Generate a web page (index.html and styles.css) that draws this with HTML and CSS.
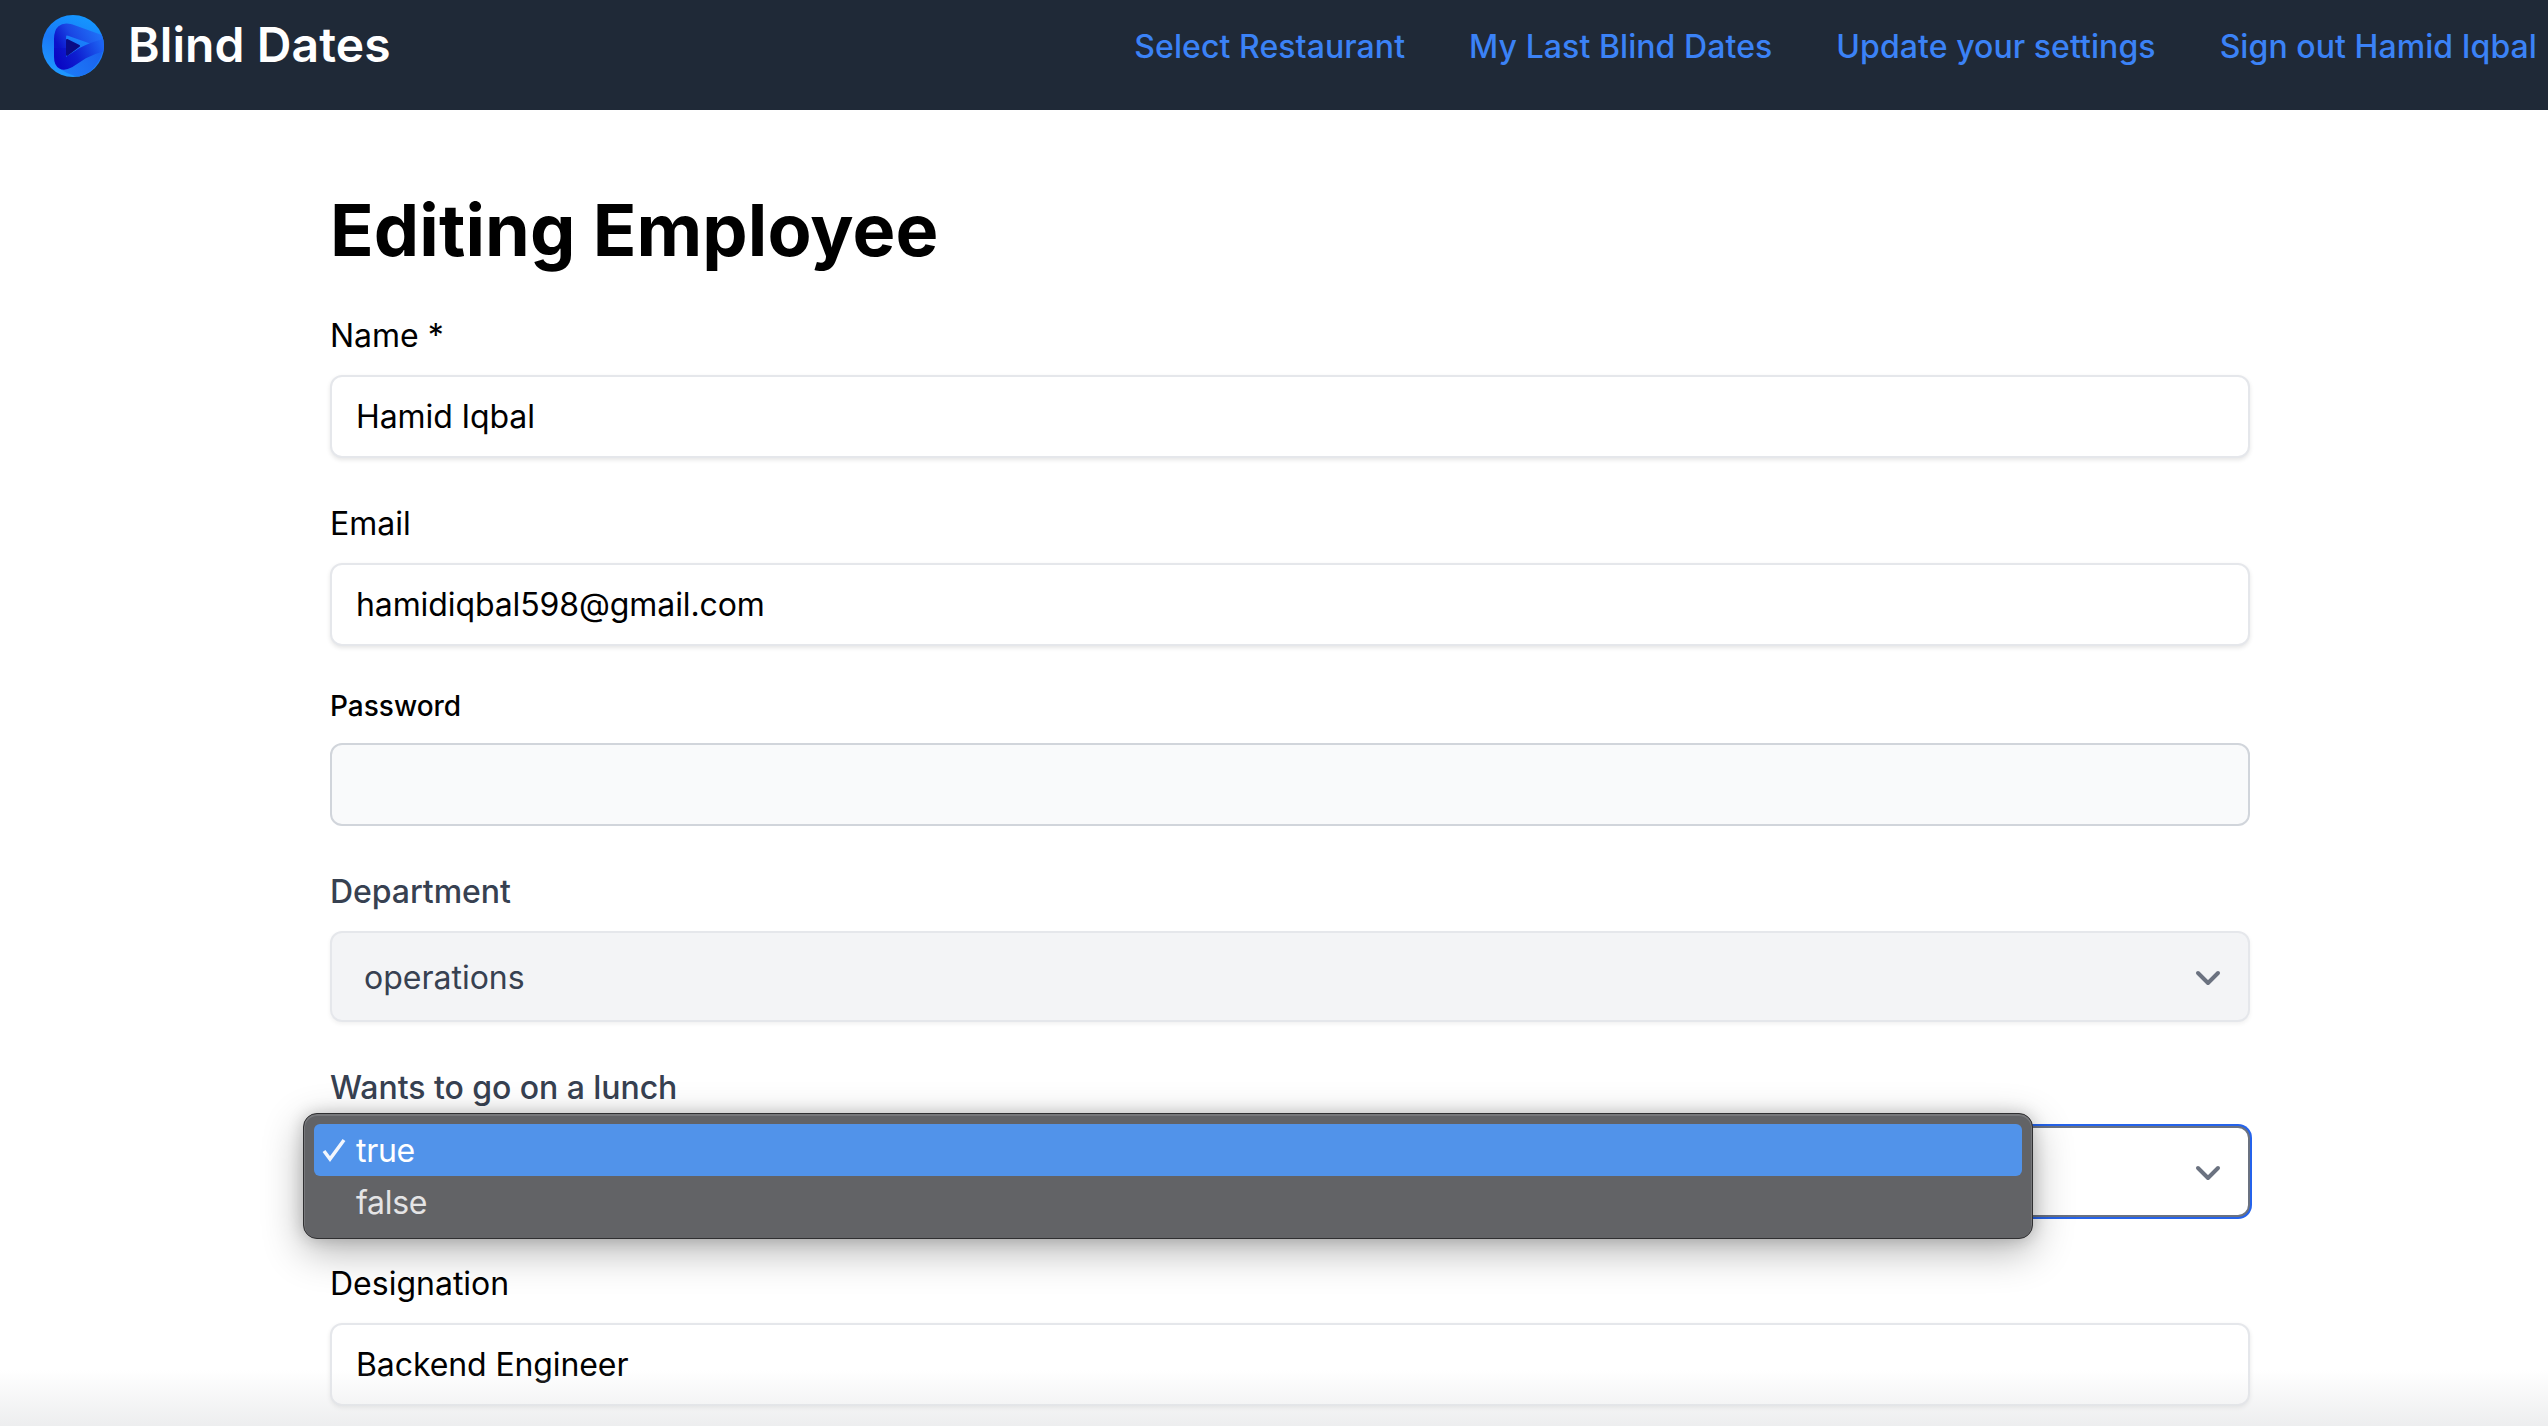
FILE: index.html
```html
<!DOCTYPE html>
<html lang="en">
<head>
<meta charset="utf-8">
<title>Editing Employee</title>
<link rel="stylesheet" href="styles.css">
</head>
<body>
<header class="topbar">
  <a class="brand" href="#">
    <svg class="brand-logo" viewBox="0 0 62 62" aria-hidden="true">
      <defs>
        <linearGradient id="disc" x1="0.7" y1="0" x2="0.3" y2="1">
          <stop offset="0" stop-color="#1498ff"/>
          <stop offset="0.5" stop-color="#1a78f8"/>
          <stop offset="1" stop-color="#1f9bff"/>
        </linearGradient>
        <linearGradient id="shell" gradientUnits="userSpaceOnUse" x1="20" y1="58" x2="60" y2="34">
          <stop offset="0" stop-color="#1c7cf8"/>
          <stop offset="1" stop-color="#1a60ee"/>
        </linearGradient>
        <linearGradient id="bandTop" gradientUnits="userSpaceOnUse" x1="18" y1="34" x2="55" y2="12">
          <stop offset="0" stop-color="#0b11ca"/>
          <stop offset="0.4" stop-color="#1a46e4"/>
          <stop offset="1" stop-color="#2072f8"/>
        </linearGradient>
        <linearGradient id="bandLow" gradientUnits="userSpaceOnUse" x1="18" y1="50" x2="60" y2="30">
          <stop offset="0" stop-color="#0a08c4"/>
          <stop offset="0.4" stop-color="#0e1ed0"/>
          <stop offset="1" stop-color="#1d62f2"/>
        </linearGradient>
        <clipPath id="discClip"><circle cx="31" cy="31" r="31"/></clipPath>
      </defs>
      <circle cx="31" cy="31" r="31" fill="url(#disc)"/>
      <g clip-path="url(#discClip)">
        <path d="M14 50Q24 60 38 62Q56 56 62 32L40 44L26 52Z" fill="url(#shell)"/>
        <path d="M18 34V24Q18 12 28 15L62 27" fill="none" stroke="url(#bandTop)" stroke-width="12"/>
        <path d="M18 33V42Q18 52 27 47L41 38Q50 33 62 30" fill="none" stroke="url(#bandLow)" stroke-width="12"/>
        <path d="M25 25L37 31L25 40Z" fill="#0a0c86" stroke="#0a0c86" stroke-width="2" stroke-linejoin="round"/>
      </g>
    </svg>
    <span class="brand-name">Blind Dates</span>
  </a>
  <nav class="nav">
    <a href="#">Select Restaurant</a>
    <a href="#">My Last Blind Dates</a>
    <a href="#">Update your settings</a>
    <a href="#">Sign out Hamid Iqbal</a>
  </nav>
</header>

<main class="page">
  <h1 class="title">Editing Employee</h1>

  <div class="group">
    <label class="label">Name *</label>
    <div class="control">Hamid Iqbal</div>
  </div>

  <div class="group">
    <label class="label">Email</label>
    <div class="control">hamidiqbal598@gmail.com</div>
  </div>

  <div class="group group-password">
    <label class="label label-small">Password</label>
    <div class="control control-muted"></div>
  </div>

  <div class="group">
    <label class="label label-grey">Department</label>
    <div class="select select-disabled">
      <span>operations</span>
      <svg class="chevron" viewBox="0 0 26 16" aria-hidden="true"><path d="M3 3l10 10L23 3"/></svg>
    </div>
  </div>

  <div class="group group-lunch">
    <label class="label label-grey">Wants to go on a lunch</label>
    <div class="select select-focus">
      <span></span>
      <svg class="chevron" viewBox="0 0 26 16" aria-hidden="true"><path d="M3 3l10 10L23 3"/></svg>
    </div>
    <div class="menu">
      <div class="option option-active">
        <svg class="check" viewBox="0 0 24 24" aria-hidden="true"><path d="M2 13l6 8L22 2"/></svg>
        <span>true</span>
      </div>
      <div class="option"><span>false</span></div>
    </div>
  </div>

  <div class="group">
    <label class="label">Designation</label>
    <div class="control">Backend Engineer</div>
  </div>
</main>

<div class="bottom-fade"></div>
</body>
</html>
```

FILE: styles.css
```css
* { box-sizing: border-box; }

html, body {
  margin: 0;
  height: 1426px;
  overflow: hidden;
  background: #fff;
}

body {
  position: relative;
  font-family: Inter, "Noto Sans", sans-serif;
  font-size: 32px;
  color: #000;
}

.topbar {
  display: flex;
  align-items: center;
  justify-content: space-between;
  height: 110px;
  padding: 0 11px 18px 42px;
  background: #1f2937;
}

.brand {
  display: flex;
  align-items: center;
  gap: 24px;
  color: #fff;
  text-decoration: none;
}

.brand-logo {
  width: 62px;
  height: 62px;
  flex: none;
}

.brand-name {
  margin-top: -3px;
  font-size: 48px;
  line-height: 56px;
  font-weight: 600;
  letter-spacing: 0.1px;
}

.nav {
  display: flex;
  gap: 64px;
  padding-top: 2px;
}

.nav a {
  color: #3b82f6;
  font-size: 32px;
  font-weight: 500;
  line-height: 40px;
  letter-spacing: 0.07px;
  text-decoration: none;
}

.page {
  width: 2250px;
  padding: 80px 0 0 330px;
}

.title {
  margin: 0 0 45px;
  font-size: 72px;
  line-height: 80px;
  font-weight: 700;
  letter-spacing: 0.1px;
}

.group { margin-bottom: 45px; }
.group-password { margin-top: -6px; }
.group-lunch { position: relative; margin-bottom: 46px; }

.label {
  display: block;
  margin-bottom: 19px;
  padding-top: 1px;
  font-size: 32px;
  line-height: 40px;
}

.label-small {
  margin-bottom: 17px;
  font-size: 28px;
  font-weight: 500;
}

.label-grey {
  color: #374151;
  font-weight: 500;
  letter-spacing: -0.05px;
}

.control {
  display: flex;
  align-items: center;
  height: 83px;
  padding: 1px 24px 0;
  border: 2px solid #e5e7eb;
  border-radius: 12px;
  background: #fff;
  box-shadow: 0 2px 4px rgba(0, 0, 0, 0.1);
  line-height: 40px;
  letter-spacing: -0.1px;
}

.control-muted {
  border-color: #d1d5db;
  background: #f9fafb;
  box-shadow: none;
}

.select {
  display: flex;
  align-items: center;
  justify-content: space-between;
  height: 91px;
  padding: 2px 27px 0 32px;
  border: 2px solid #e5e7eb;
  border-radius: 12px;
  line-height: 40px;
}

.select-disabled {
  background: #f3f4f6;
  color: #374151;
  box-shadow: 0 2px 4px rgba(0, 0, 0, 0.06);
}

.select-focus {
  margin-top: -1px;
  border-color: #6b7280;
  background: #fff;
  box-shadow: 0 0 0 2px #2563eb;
}

.chevron {
  width: 26px;
  height: 16px;
  fill: none;
  stroke: #6b7280;
  stroke-width: 4;
  stroke-linecap: round;
  stroke-linejoin: round;
}

.menu {
  position: absolute;
  top: 46px;
  left: -27px;
  display: flex;
  flex-direction: column;
  width: 1730px;
  height: 126px;
  padding: 10px 10px 0;
  border: 1px solid #2f2f31;
  border-radius: 14px;
  background: #626366;
  box-shadow: inset 0 1px 0 1px #77787b, 0 12px 40px rgba(0, 0, 0, 0.3), 0 0 16px rgba(0, 0, 0, 0.18);
}

.option {
  position: relative;
  display: flex;
  align-items: center;
  height: 52px;
  padding: 1px 0 0 42px;
  border-radius: 6px;
  color: #e4e4e5;
  line-height: 40px;
  letter-spacing: -0.3px;
}

.option-active {
  background: #5193ea;
  color: #fff;
}

.check {
  position: absolute;
  left: 8px;
  top: 14px;
  width: 24px;
  height: 24px;
  fill: none;
  stroke: #f2f6fd;
  stroke-width: 3.5;
}

.bottom-fade {
  position: absolute;
  left: 0;
  right: 0;
  bottom: 0;
  height: 56px;
  background: linear-gradient(to bottom, rgba(225, 226, 228, 0), rgba(225, 226, 228, 0.6));
  pointer-events: none;
}
```
